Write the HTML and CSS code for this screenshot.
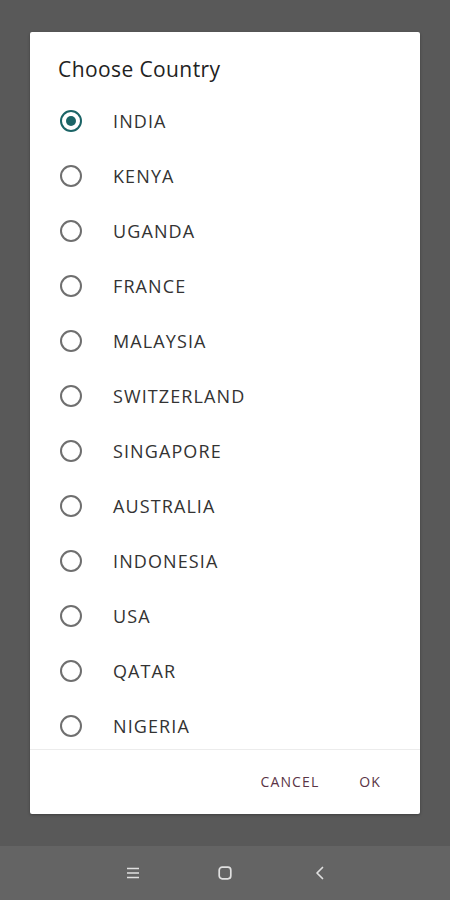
FILE: index.html
```html
<!DOCTYPE html>
<html>
<head>
<meta charset="utf-8">
<link rel="stylesheet" href="styles.css">
</head>
<body>
<div class="screen">
  <div class="stage">
    <div class="dialog">
      <div class="title">Choose Country</div>
      <ul class="list">
        <li class="row"><span class="radio checked"></span><span class="label">INDIA</span></li>
        <li class="row"><span class="radio"></span><span class="label">KENYA</span></li>
        <li class="row"><span class="radio"></span><span class="label">UGANDA</span></li>
        <li class="row"><span class="radio"></span><span class="label">FRANCE</span></li>
        <li class="row"><span class="radio"></span><span class="label">MALAYSIA</span></li>
        <li class="row"><span class="radio"></span><span class="label">SWITZERLAND</span></li>
        <li class="row"><span class="radio"></span><span class="label">SINGAPORE</span></li>
        <li class="row"><span class="radio"></span><span class="label">AUSTRALIA</span></li>
        <li class="row"><span class="radio"></span><span class="label">INDONESIA</span></li>
        <li class="row"><span class="radio"></span><span class="label">USA</span></li>
        <li class="row"><span class="radio"></span><span class="label">QATAR</span></li>
        <li class="row"><span class="radio"></span><span class="label">NIGERIA</span></li>
      </ul>
      <div class="actions">
        <button class="btn">CANCEL</button>
        <button class="btn btn-ok">OK</button>
      </div>
    </div>
  </div>
  <div class="navbar">
    <svg class="nav-icon" width="16" height="16" viewBox="0 0 16 16"><path d="M2 3.5h12M2 8h12M2 12.5h12" stroke="#e0e0e0" stroke-width="1.6" fill="none"/></svg>
    <svg class="nav-icon nav-home" width="16" height="16" viewBox="0 0 16 16"><rect x="2.2" y="2.2" width="11.6" height="11.6" rx="3" stroke="#e0e0e0" stroke-width="1.7" fill="none"/></svg>
    <svg class="nav-icon nav-back" width="16" height="16" viewBox="0 0 16 16"><path d="M10.5 2.5L5 8l5.5 5.5" stroke="#e0e0e0" stroke-width="1.7" fill="none" stroke-linecap="round" stroke-linejoin="round"/></svg>
  </div>
</div>
</body>
</html>
```

FILE: styles.css
```css
* { box-sizing: border-box; }
html, body {
  margin: 0;
  padding: 0;
  width: 450px;
  height: 900px;
  overflow: hidden;
  background: #595959;
  font-family: "Open Sans", "Noto Sans", sans-serif;
}
.screen {
  width: 450px;
  height: 900px;
  display: flex;
  flex-direction: column;
}
.stage {
  height: 846px;
  padding: 32px 30px 0 30px;
}
.dialog {
  width: 390px;
  height: 782px;
  background: #ffffff;
  border-radius: 2px;
  display: flex;
  flex-direction: column;
  box-shadow: 0 1px 3px rgba(0,0,0,0.3);
  overflow: hidden;
}
.title {
  height: 61.5px;
  flex-shrink: 0;
  padding: 23px 0 0 28px;
  font-size: 21px;
  line-height: 28px;
  letter-spacing: 0.4px;
  color: #222222;
}
.list {
  list-style: none;
  margin: 0;
  padding: 0;
  height: 655px;
  flex-shrink: 0;
  overflow: hidden;
}
.row {
  height: 55px;
  display: flex;
  align-items: center;
  padding-left: 30px;
}
.radio {
  width: 22px;
  height: 22px;
  border-radius: 50%;
  border: 2px solid #6f6f6f;
  display: flex;
  align-items: center;
  justify-content: center;
  flex-shrink: 0;
}
.radio.checked {
  border-color: #1b6466;
}
.radio.checked::after {
  content: "";
  width: 10px;
  height: 10px;
  border-radius: 50%;
  background: #1b6466;
}
.label {
  margin-left: 31px;
  font-size: 18px;
  color: #333333;
  letter-spacing: 1.1px;
}
.actions {
  border-top: 1px solid #ececec;
  flex: 1;
  display: flex;
  justify-content: flex-end;
  align-items: center;
  padding: 0 39px 0 0;
}
.btn {
  background: none;
  border: none;
  padding: 0;
  font-family: "Open Sans", "Noto Sans", sans-serif;
  font-size: 14px;
  line-height: 20px;
  letter-spacing: 1.1px;
  color: #5a3445;
}
.btn-ok {
  margin-left: 40px;
}
.navbar {
  height: 54px;
  background: #646464;
  display: flex;
  align-items: center;
  padding-left: 125px;
}
.nav-icon { display: block; }
.nav-home { margin-left: 76px; }
.nav-back { margin-left: 79px; }
```
